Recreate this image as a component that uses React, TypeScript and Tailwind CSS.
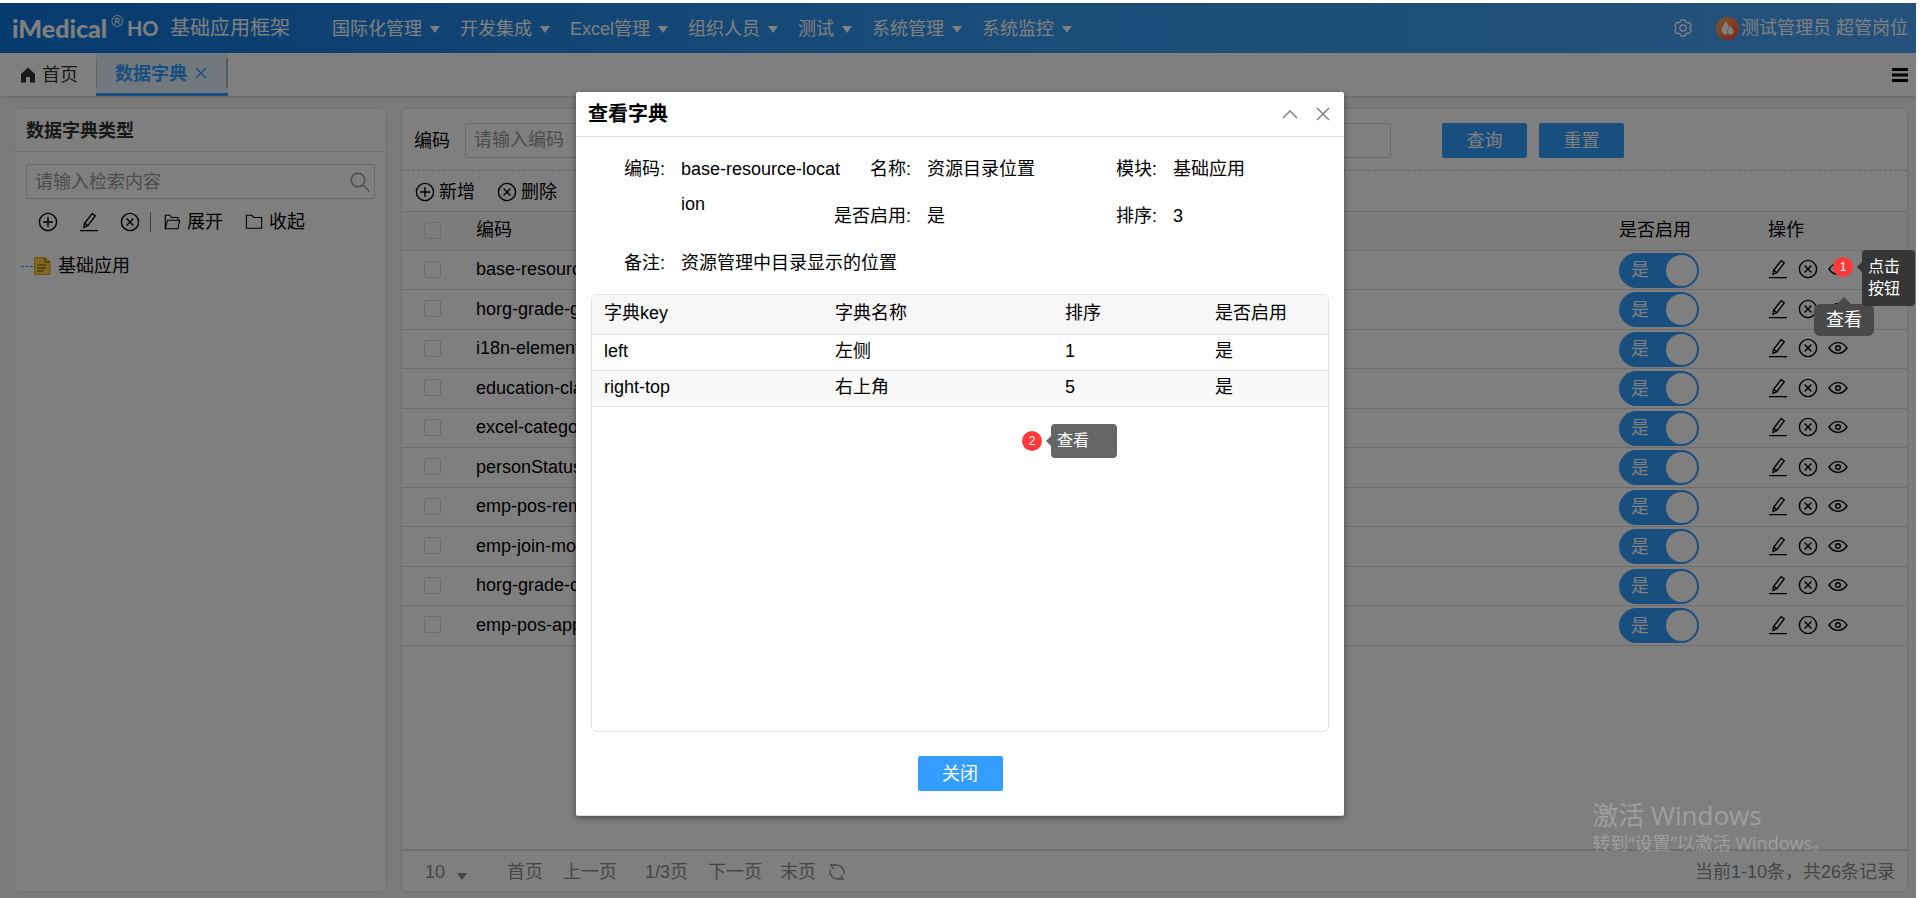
import React from "react";

const MENUS = ["国际化管理", "开发集成", "Excel管理", "组织人员", "测试", "系统管理", "系统监控"];

const ROWS = [
  "base-resource",
  "horg-grade-gp",
  "i18n-element",
  "education-class",
  "excel-category",
  "personStatus",
  "emp-pos-rem",
  "emp-join-mod",
  "horg-grade-cl",
  "emp-pos-app",
];

const ITEMS = [
  { key: "left", name: "左侧", sort: 1, active: "是" },
  { key: "right-top", name: "右上角", sort: 5, active: "是" },
];

function Icon({ size = 20, children }: { size?: number; children: React.ReactNode }) {
  return (
    <svg
      width={size}
      height={size}
      viewBox="0 0 20 20"
      fill="none"
      stroke="currentColor"
      strokeWidth="1.4"
      className="shrink-0"
      aria-hidden="true"
    >
      {children}
    </svg>
  );
}

const PlusIcon = () => (
  <Icon>
    <circle cx="10" cy="10" r="8.6" />
    <path d="M10 5v10M5 10h10" />
  </Icon>
);

const RemoveIcon = () => (
  <Icon>
    <circle cx="10" cy="10" r="8.6" />
    <path d="M6.6 6.6l6.8 6.8M13.4 6.6l-6.8 6.8" />
  </Icon>
);

const PencilIcon = () => (
  <Icon>
    <path d="M13.2 1.6l3 2.2-7.4 10-3.8 1.6.6-4.2z" />
    <path d="M5.6 11.2l3.2 2.4M1 18.6h18" />
  </Icon>
);

const EyeIcon = () => (
  <Icon>
    <path d="M1 10c2.400-3.600 5.400-5.400 9-5.400s6.600 1.800 9 5.400c-2.400 3.600-5.400 5.400-9 5.400S3.400 13.600 1 10z" />
    <circle cx="10" cy="10" r="2.300" />
  </Icon>
);

const FolderOpenIcon = () => (
  <Icon size={18}>
    <path d="M2.500 17.500V2.500h5l2 2.500h7v3M2.500 17.500L5 8h13.500L16.500 17.500z" strokeWidth="1.200" />
  </Icon>
);

const FolderIcon = () => (
  <Icon size={18}>
    <path d="M1.500 17V2.500h6L10 5h8.500v12z" strokeWidth="1.200" />
  </Icon>
);

const Caret = () => (
  <svg width="10" height="8" viewBox="0 0 10 8" fill="currentColor" className="shrink-0" aria-hidden="true">
    <path d="M0 1h10L5 8z" />
  </svg>
);

function TopBar() {
  return (
    <header className="flex h-[50px] items-center bg-linear-to-r from-[#0c76dc] via-[#3499f2] to-[#48a4fa] pr-2 pl-3 text-white">
      <h1 className="flex w-[278px] items-center whitespace-nowrap">
        <span className="font-['Lato'] text-[25px] leading-6 font-black">iMedical</span>
        <span className="mx-1 self-start text-base leading-4">®</span>
        <span className="font-['Lato'] text-xl leading-6 font-bold">HO</span>
        <span className="ml-auto text-xl font-normal">基础应用框架</span>
      </h1>
      <nav className="ml-[42px] flex flex-1 gap-5 pt-0.5">
        {MENUS.map((m) => (
          <a key={m} href="#" className="flex items-center gap-2 whitespace-nowrap">
            {m}
            <Caret />
          </a>
        ))}
      </nav>
      <button type="button" aria-label="设置" className="mr-6">
        <svg width="18" height="18" viewBox="0 0 18 18" fill="none" stroke="currentColor" strokeWidth="1.300">
          <path d="M7 1h4l.8 2 1.400.8 2.200-.3 1.900 3.300L16 8.300v1.400l1.300 1.500-1.900 3.300-2.200-.3-1.400.8-.8 2H7l-.8-2-1.400-.8-2.200.3-1.900-3.300L2 9.700V8.300L.7 6.800l1.900-3.300 2.200.3L6.200 3z" />
          <circle cx="9" cy="9" r="3.200" />
        </svg>
      </button>
      <a href="#" className="flex items-center whitespace-nowrap">
        <svg width="23" height="23" viewBox="0 0 23 23" aria-hidden="true">
          <defs>
            <linearGradient id="avatar" x1="0" y1="0" x2="1" y2="1">
              <stop offset="0" stopColor="#ffb050" />
              <stop offset="1" stopColor="#ff4a3c" />
            </linearGradient>
          </defs>
          <circle cx="11.500" cy="11.500" r="11.500" fill="url(#avatar)" />
          <path d="M10 4.500c2.500 3.500 4 6 4 8.600a4.300 4.300 0 0 1-8.600 0c0-2.600 2-5.100 4.600-8.600z" fill="#fff" />
          <path d="M14.500 8.500c2 2.600 3.300 4.400 3.300 6.200a3.300 3.300 0 0 1-6.600 0c0-1.800 1.400-3.600 3.300-6.200z" fill="#fff" stroke="#ff7a45" strokeWidth=".7" />
        </svg>
        <span className="ml-0.5">测试管理员 超管岗位</span>
      </a>
    </header>
  );
}

function TabBar() {
  return (
    <div className="flex h-[43px] items-stretch bg-white pr-2 shadow-sm">
      <a href="#" className="flex w-24 items-center pl-5 text-[#333]">
        <svg width="16" height="16" viewBox="0 0 16 16" fill="currentColor" aria-hidden="true">
          <path d="M8 .5L1 7v8.500h5V10h4v5.500h5V7z" />
        </svg>
        <span className="ml-1.5">首页</span>
      </a>
      <div className="flex w-[132px] items-center border-b-3 border-[#339eff] bg-[#e2f0fc] text-[#339eff]">
        <span className="h-[30px] w-px bg-[#ccc]" />
        <a href="#" className="mt-0.5 ml-[18px] font-bold">
          数据字典
        </a>
        <button type="button" aria-label="关闭标签" className="ml-2">
          <svg width="12" height="12" viewBox="0 0 12 12" fill="none" stroke="currentColor" strokeWidth="1.200">
            <path d="M1 1l10 10M11 1L1 11" />
          </svg>
        </button>
        <span className="ml-auto h-[30px] w-0.5 bg-[#bbb]" />
      </div>
      <button type="button" aria-label="菜单" className="ml-auto">
        <svg width="16" height="14" viewBox="0 0 16 14" fill="#000">
          <path d="M0 0h16v3H0zM0 5.500h16v3H0zM0 11h16v3H0z" />
        </svg>
      </button>
    </div>
  );
}

function TypePanel() {
  return (
    <aside className="w-[373px] shrink-0 rounded-md border border-[#e2e2e2] bg-white">
      <h2 className="h-[43px] border-b border-[#e2e2e2] px-[11px] leading-[45px] font-bold text-[#333]">数据字典类型</h2>
      <div className="mx-[11px] mt-3 flex h-[35px] items-center rounded-xs border border-[#d4d4d4] pr-1 pl-2">
        <input aria-label="检索内容" placeholder="请输入检索内容" className="min-w-0 flex-1 placeholder:text-[#999]" />
        <button type="button" aria-label="检索" className="text-[#999]">
          <Icon>
            <circle cx="8" cy="8" r="6.800" />
            <path d="M13 13l6.500 6.500" />
          </Icon>
        </button>
      </div>
      <div className="mt-2 flex h-[30px] items-center pl-[23px]">
        <button type="button" aria-label="新增"><PlusIcon /></button>
        <button type="button" aria-label="编辑" className="ml-[21px]"><PencilIcon /></button>
        <button type="button" aria-label="删除" className="ml-[21px]"><RemoveIcon /></button>
        <span className="ml-2.5 h-5 w-px bg-[#888]" />
        <button type="button" className="ml-3 flex items-center gap-1.5"><FolderOpenIcon />展开</button>
        <button type="button" className="ml-[22px] flex items-center gap-1.5"><FolderIcon />收起</button>
      </div>
      <div className="mt-[13px] flex h-8 items-center pl-1.5">
        <span className="w-3 border-t border-dashed border-[#339eff]" />
        <svg width="18" height="18" viewBox="0 0 18 18" className="mr-[7px]" aria-hidden="true">
          <path d="M1.500.5h10.500l5 4.500v12.500H1.500z" fill="#ffd04a" stroke="#d9a520" />
          <path d="M12 .5V5h5M4.500 8h8.500M4.500 11h8.500M4.500 14h6" fill="none" stroke="#a87a10" strokeWidth="1.400" />
        </svg>
        基础应用
      </div>
    </aside>
  );
}

function DictTable() {
  return (
    <table className="w-full table-fixed border-t border-[#dcdcdc] text-left">
      <colgroup>
        <col className="w-[62px]" />
        <col />
        <col className="w-[149px]" />
        <col className="w-[151px]" />
      </colgroup>
      <thead>
        <tr className="h-[39px] border-b border-[#dcdcdc] bg-[#f9f9f9]">
          <th className="pb-0.5 pl-[22px]">
            <input type="checkbox" aria-label="全选" className="block size-[17px] appearance-none rounded-xs border border-[#ddd]" />
          </th>
          <th className="px-3 pb-0.5 font-normal">编码</th>
          <th className="px-3 pb-0.5 font-normal">是否启用</th>
          <th className="px-3 pb-0.5 font-normal">操作</th>
        </tr>
      </thead>
      <tbody>
        {ROWS.map((code) => (
          <tr key={code} className="h-[39px] border-b border-[#dcdcdc] even:h-10">
            <td className="pb-0.5 pl-[22px]">
              <input type="checkbox" aria-label={code} className="block size-[17px] appearance-none rounded-xs border border-[#ddd]" />
            </td>
            <td className="px-3 pb-0.5 leading-6">{code}</td>
            <td className="px-3">
              <label className="flex h-[35px] w-20 items-center justify-between rounded-full bg-[#339eff] pr-0.5 pl-3 text-white">
                是
                <input type="checkbox" defaultChecked className="size-[31px] appearance-none rounded-full bg-white" />
              </label>
            </td>
            <td className="px-3 pb-0.5">
              <div className="flex items-center gap-2.5">
                <button type="button" aria-label="编辑"><PencilIcon /></button>
                <button type="button" aria-label="删除"><RemoveIcon /></button>
                <button type="button" aria-label="查看"><EyeIcon /></button>
              </div>
            </td>
          </tr>
        ))}
      </tbody>
    </table>
  );
}

function Pager() {
  return (
    <footer className="mt-auto flex h-[42px] items-center border-t-2 border-[#dcdcdc] px-3 pt-0.5 whitespace-nowrap text-[#8c8c8c]">
      <button type="button" className="ml-[11px] flex items-center gap-3">
        10
        <span className="pt-2"><Caret /></span>
      </button>
      <a href="#" className="ml-10">首页</a>
      <a href="#" className="ml-5">上一页</a>
      <span className="ml-7">1/3页</span>
      <a href="#" className="ml-5">下一页</a>
      <a href="#" className="ml-[18px]">末页</a>
      <button type="button" aria-label="刷新" className="ml-3">
        <Icon size={18}>
          <path d="M17.500 12.500A8 8 0 0 0 9 2.500H6M2.500 7.500a8 8 0 0 0 8.500 10h3" />
          <path d="M6 6.500L3 2h5.500M14 13.500l3 4.500h-5.500" />
        </Icon>
      </button>
      <span className="ml-auto">当前1-10条，共26条记录</span>
    </footer>
  );
}

function DictPanel() {
  return (
    <main className="flex min-w-0 flex-1 flex-col rounded-md border border-[#dcdcdc] bg-white">
      <form className="flex h-[62px] items-center border-b border-dashed border-[#ccc] px-3 pt-0.5">
        <label htmlFor="code" className="w-[51px]">编码</label>
        <div className="flex w-[926px] items-center">
          <input id="code" placeholder="请输入编码" className="h-[35px] w-[280px] rounded-xs border border-[#d4d4d4] px-2 placeholder:text-[#999]" />
          <input aria-label="名称" className="ml-20 h-[35px] min-w-0 flex-1 rounded-xs border border-[#d4d4d4] px-2" />
        </div>
        <button type="button" className="ml-[51px] h-[35px] w-[85px] rounded-xs bg-[#339eff] text-white">查询</button>
        <button type="button" className="ml-3 h-[35px] w-[85px] rounded-xs bg-[#339eff] text-white">重置</button>
      </form>
      <div className="flex h-10 items-center gap-[22px] pt-0.5 pl-[13px]">
        <button type="button" className="flex items-center gap-1"><PlusIcon />新增</button>
        <button type="button" className="flex items-center gap-1"><RemoveIcon />删除</button>
      </div>
      <DictTable />
      <Pager />
    </main>
  );
}

function Field({ label, value, className = "" }: { label: string; value: React.ReactNode; className?: string }) {
  return (
    <div className={"flex gap-4 leading-[35px] " + className}>
      <dt className="flex w-[74px] shrink-0 justify-end whitespace-nowrap">{label}:</dt>
      <dd className="-mr-1 min-w-0 flex-1 break-all">{value}</dd>
    </div>
  );
}

function ViewDialog() {
  return (
    <section
      role="dialog"
      aria-labelledby="dlg-title"
      className="flex w-[768px] flex-col rounded-xs border-b border-[#ddd] bg-white shadow-[0_2px_6px_rgba(0,0,0,0.4)]"
    >
      <div className="flex h-[45px] items-center border-b border-[#e2e2e2] pr-3.5 pl-3">
        <h2 id="dlg-title" className="flex-1 text-xl font-bold">查看字典</h2>
        <button type="button" aria-label="折叠" className="text-[#777]">
          <svg width="16" height="14" viewBox="0 0 16 14" fill="none" stroke="currentColor" strokeWidth="1.300">
            <path d="M1 11l7-7 7 7" />
          </svg>
        </button>
        <button type="button" aria-label="关闭" className="ml-[18px] text-[#777]">
          <svg width="14" height="14" viewBox="0 0 14 14" fill="none" stroke="currentColor" strokeWidth="1.300">
            <path d="M1 1l12 12M13 1L1 13" />
          </svg>
        </button>
      </div>
      <div className="px-[15px] pt-[15px]">
        <dl className="grid grid-cols-3 gap-y-3">
          <Field label="编码" value="base-resource-location" className="row-span-2" />
          <Field label="名称" value="资源目录位置" />
          <Field label="模块" value="基础应用" />
          <Field label="是否启用" value="是" />
          <Field label="排序" value="3" />
          <Field label="备注" value="资源管理中目录显示的位置" className="col-span-3" />
        </dl>
        <div className="mt-[13px] h-[438px] overflow-hidden rounded-md border border-[#e2e2e2]">
          <table className="w-full table-fixed text-left">
            <colgroup>
              <col className="w-[231px]" />
              <col className="w-[230px]" />
              <col className="w-[150px]" />
              <col />
            </colgroup>
            <thead>
              <tr className="h-[39px] border-b border-[#e2e2e2] bg-[#f7f7f7]">
                <th className="px-3 pb-0.5 font-normal">字典key</th>
                <th className="px-3 pb-0.5 font-normal">字典名称</th>
                <th className="px-3 pb-0.5 font-normal">排序</th>
                <th className="px-3 pb-0.5 font-normal">是否启用</th>
              </tr>
            </thead>
            <tbody>
              {ITEMS.map((it) => (
                <tr key={it.key} className="h-9 border-b border-[#e2e2e2] leading-6 even:bg-[#f9f9f9]">
                  <td className="px-3 pb-0.5">{it.key}</td>
                  <td className="px-3 pb-0.5">{it.name}</td>
                  <td className="px-3 pb-0.5">{it.sort}</td>
                  <td className="px-3 pb-0.5">{it.active}</td>
                </tr>
              ))}
            </tbody>
          </table>
        </div>
      </div>
      <div className="flex h-[83px] items-center justify-center">
        <button type="button" className="h-[35px] w-[85px] rounded-xs bg-[#339eff] text-white">关闭</button>
      </div>
    </section>
  );
}

// numbered red marker with a dark note to its right
function Step({ no, note, dark = false }: { no: number; note: React.ReactNode; dark?: boolean }) {
  return (
    <div className="flex items-start text-base leading-[22px] text-white">
      <span className="mt-[7px] flex size-5 items-center justify-center rounded-full bg-[#ff3838] text-xs">{no}</span>
      <svg
        width="5"
        height="10"
        viewBox="0 0 5 10"
        className={dark ? "mt-3 ml-1 text-[#333]" : "mt-3 ml-1 text-[#666]"}
        aria-hidden="true"
      >
        <path d="M5 0v10L0 5z" fill="currentColor" />
      </svg>
      <span className={dark ? "w-[53px] rounded-sm bg-[#333]/95 px-1.5 py-1.5" : "w-[66px] rounded-sm bg-[#666] px-1.5 py-1.5"}>
        {note}
      </span>
    </div>
  );
}

export default function App() {
  return (
    <div className="relative min-h-screen bg-white pt-[3px] pr-1 font-['Liberation_Sans','Noto_Sans_CJK_SC',sans-serif] text-lg leading-6 text-black">
      <div className="relative flex min-h-[calc(100vh-3px)] flex-col bg-[#f4f4f4]">
        <TopBar />
        <TabBar />
        <div className="flex flex-1 gap-[14px] pt-3 pr-2 pb-1.5 pl-[14px]">
          <TypePanel />
          <DictPanel />
        </div>
        <div className="absolute inset-0 bg-black/50" />
      </div>

      <div className="absolute right-[90px] bottom-[43px] font-['Open_Sans','Noto_Sans_CJK_SC',sans-serif] whitespace-nowrap text-white/25">
        <p className="text-[26px] leading-8">激活 Windows</p>
        <p>转到“设置”以激活 Windows。</p>
      </div>

      <div className="absolute inset-x-0 top-[92px] flex justify-center">
        <ViewDialog />
        <div className="absolute top-[332px] left-1/2 ml-[62px]">
          <Step no={2} note="查看" />
        </div>
      </div>

      <div className="absolute top-[297px] right-[46px] flex flex-col items-center">
        <svg width="14" height="7" viewBox="0 0 14 7" aria-hidden="true">
          <path d="M7 0l7 7H0z" fill="#4a4a4a" />
        </svg>
        <span className="rounded-md bg-[#4a4a4a] px-3 py-1 text-white">查看</span>
      </div>
      <div className="absolute top-[250px] right-[5px]">
        <Step
          no={1}
          dark
          note={
            <>
              点击
              <br />
              按钮
            </>
          }
        />
      </div>
    </div>
  );
}
